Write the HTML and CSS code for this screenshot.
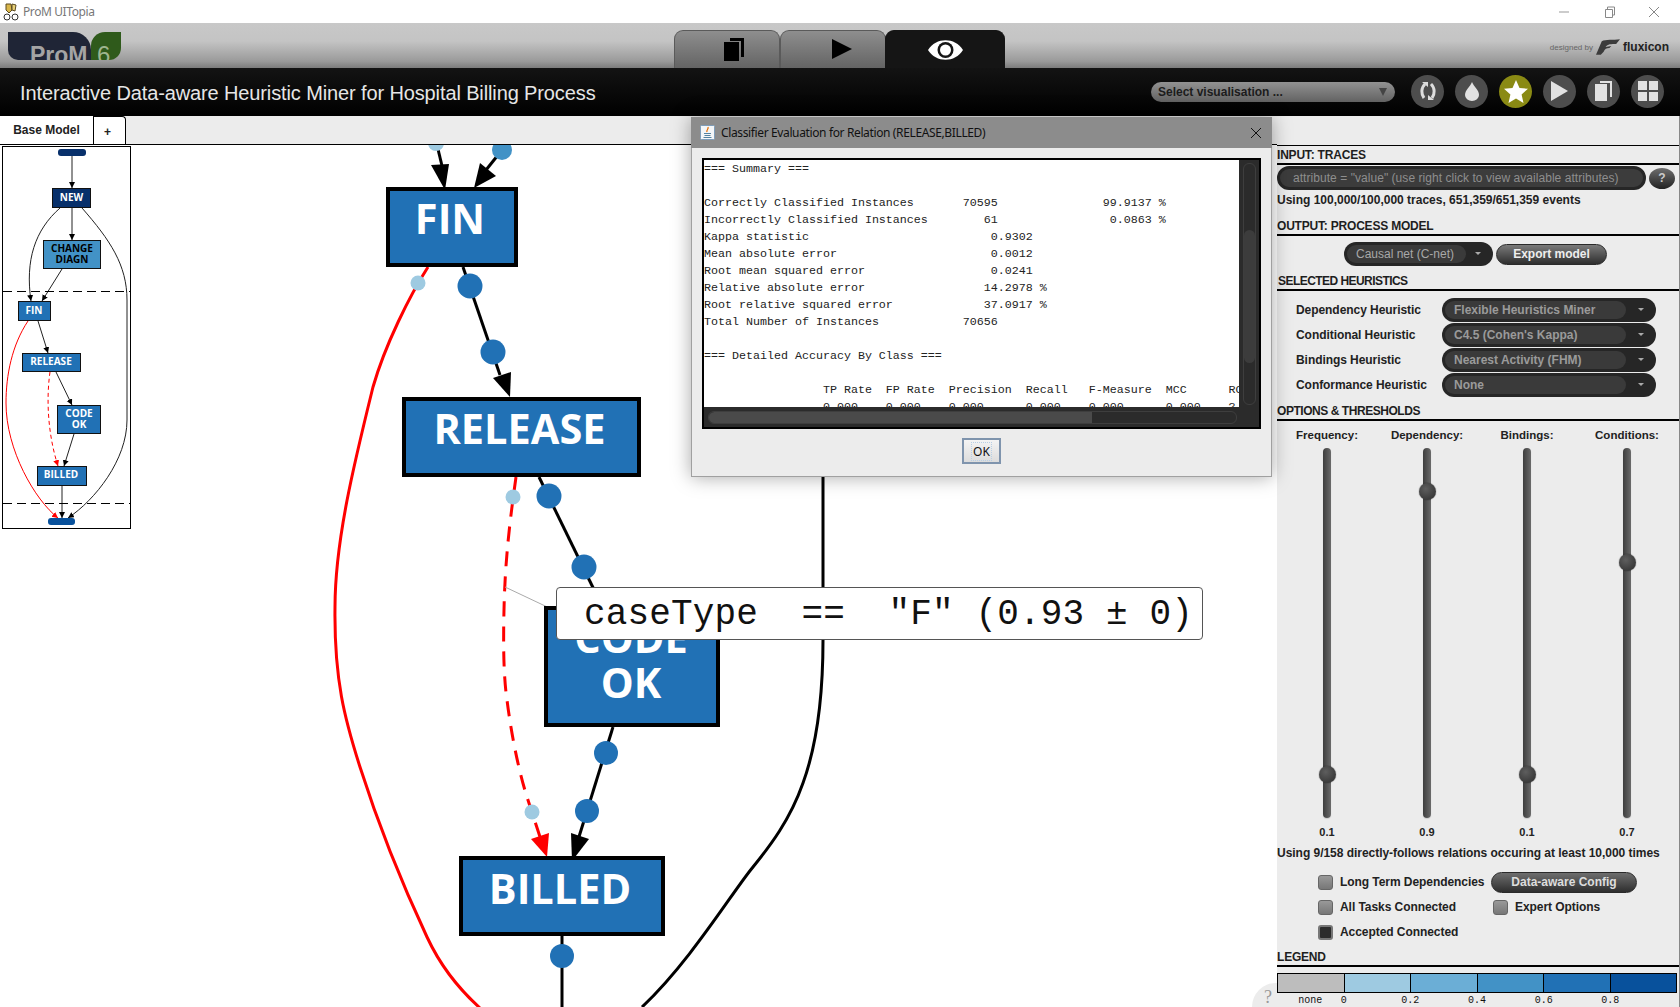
FILE: index.html
```html
<!DOCTYPE html>
<html lang="en">
<head>
  <meta charset="UTF-8">
  <title>ProM UITopia</title>
  <link rel="stylesheet" href="styles.css">
</head>
<body>
  <div class="titlebar">
    <svg class="app-icon" width="16" height="18" viewBox="0 0 16 18">
      <path d="M3 1h5l1 6-3 3-3-3z" fill="#d9b64a" stroke="#5a4a20"/>
      <path d="M9 1l4 1-1 6-3-1z" fill="#e9d27a" stroke="#5a4a20"/>
      <circle cx="4" cy="14" r="3" fill="#fff" stroke="#333"/>
      <circle cx="12" cy="14" r="3" fill="#fff" stroke="#333"/>
    </svg>
    <span class="app-name">ProM UITopia</span>
    <div class="win-buttons">
      <svg width="12" height="12" viewBox="0 0 12 12"><path d="M1 6h10" stroke="#999" fill="none"/></svg>
      <svg width="12" height="12" viewBox="0 0 12 12"><path d="M2.500 3.500h7v8h-7zM4.500 3.500v-2.500h7v8h-2" stroke="#888" fill="none"/></svg>
      <svg width="12" height="12" viewBox="0 0 12 12"><path d="M1 1l10 10M11 1l-10 10" stroke="#888" fill="none"/></svg>
    </div>
  </div>

  <div class="topbar">
    <div class="logo">
      <div class="logo-prom">ProM</div>
      <div class="logo-six">6</div>
    </div>
    <div class="views">
      <div class="view-tab view-tab-copy">
        <svg width="20" height="23" viewBox="0 0 20 23"><path d="M6 0h14v19h-3V3H6z" fill="#000"/><rect x="0" y="4" width="15" height="19" fill="#000"/></svg>
      </div>
      <div class="view-tab view-tab-play">
        <svg width="20" height="20" viewBox="0 0 20 20"><path d="M0 0l20 10L0 20z" fill="#000"/></svg>
      </div>
      <div class="view-tab view-tab-on">
        <svg width="35" height="20" viewBox="0 0 35 20"><path d="M0 10C8 -3 27 -3 35 10C27 23 8 23 0 10z" fill="#fff"/><circle cx="17.500" cy="10" r="8" fill="#151515"/><circle cx="17.500" cy="10" r="5.500" fill="#fff"/></svg>
      </div>
    </div>
    <div class="credit">
      <span class="credit-by">designed by</span>
      <svg width="24" height="16" viewBox="0 0 25 16"><path d="M6 2C10 0 18 1 25 0L21 5C16 5 12 5 10 8L16 7L14 9C11 9 9 10 8 13L5 16H0z" fill="#3c3c3c"/></svg>
      <span class="credit-name">fluxicon</span>
    </div>
  </div>

  <div class="headbar">
    <h1>Interactive Data-aware Heuristic Miner for Hospital Billing Process</h1>
    <div class="vis-select">Select visualisation ...<span class="vis-arrow"></span></div>
    <div class="round-btns">
      <div class="round-btn"><svg width="20" height="20" viewBox="0 0 20 20"><path d="M7 3C3 7 3 13 6 17M13 3C17 7 17 13 14 17" stroke="#ddd" stroke-width="3" fill="none"/><path d="M4 1h6v5zM16 19h-6v-5z" fill="#ddd"/></svg></div>
      <div class="round-btn"><svg width="14" height="19" viewBox="0 0 14 19"><path d="M7 0C9 5 14 8 14 13A7 6 0 0 1 0 13C0 8 5 5 7 0z" fill="#e2e2e2"/></svg></div>
      <div class="round-btn round-btn-on"><svg width="24" height="23" viewBox="0 0 24 23"><path d="M12 0l3.500 8 8.500.8-6.400 5.700 1.900 8.500L12 18.500 4.500 23l1.900-8.500L0 8.800 8.500 8z" fill="#fff"/></svg></div>
      <div class="round-btn"><svg width="17" height="20" viewBox="0 0 17 20"><path d="M0 0l17 10L0 20z" fill="#e2e2e2"/></svg></div>
      <div class="round-btn"><svg width="17" height="20" viewBox="0 0 17 20"><path d="M5 0h12v16h-2V2H5z" fill="#e2e2e2"/><rect y="3" width="12" height="17" fill="#e2e2e2"/></svg></div>
      <div class="round-btn"><svg width="20" height="20" viewBox="0 0 20 20"><path d="M0 0h9v9H0zM11 0h9v9h-9zM0 11h9v9H0zM11 11h9v9h-9z" fill="#e2e2e2"/></svg></div>
    </div>
  </div>

  <div class="main">
    <div class="workspace">
      <div class="tabs">
        <div class="tab tab-on">Base Model</div>
        <div class="tab tab-add">+</div>
      </div>
      <div class="canvas">
        <svg class="graph" width="1277" height="862" viewBox="0 145 1277 862">
          <defs>
            <marker id="mini-black" markerWidth="7" markerHeight="7" refX="6" refY="3" orient="auto"><path d="M0 0l6 3-6 3z" fill="#000"/></marker>
            <marker id="mini-red" markerWidth="7" markerHeight="7" refX="6" refY="3" orient="auto"><path d="M0 0l6 3-6 3z" fill="#f00"/></marker>
          </defs>

          <!-- main model -->
          <g class="edge">
            <path d="M437 145L443 170"/>
            <path d="M502 150L486 170"/>
            <path d="M463 267L500 375"/>
            <path d="M539 477L602 606"/>
            <path d="M613 727L578 840"/>
            <path d="M562 936V1007"/>
            <path d="M823 476V640C823 700 815 750 803 783C790 820 770 846 753 867C733 891 690 962 642 1007"/>
          </g>
          <path class="edge-red" d="M428 267C410 295 385 345 373 387C355 460 335 540 335 607C334 680 345 720 360 767C380 830 405 890 427 937C440 965 460 990 480 1008"/>
          <path class="edge-red edge-dash" d="M516 477C510 520 505 560 504 610C503 650 504 680 507 700C512 740 520 775 527 797L541 840"/>
          <path d="M505 587L560 613" stroke="#aaa" fill="none"/>
          <path d="M445 190L431 165L449 164z"/>
          <path d="M474 188L480 163L496 176z"/>
          <path d="M510 397L493 378L511 372z"/>
          <path d="M572 861L571 833L589 839z"/>
          <path d="M547 857L531 839L549 833z" fill="#f00"/>

          <rect class="node" x="388" y="189" width="128" height="76"/>
          <text class="node-text" x="450" y="234">FIN</text>
          <rect class="node" x="404" y="399" width="235" height="76"/>
          <text class="node-text" x="519.500" y="444">RELEASE</text>
          <rect class="node" x="546" y="608" width="172" height="117"/>
          <text class="node-text" x="631" y="653">CODE</text>
          <text class="node-text" x="631" y="698">OK</text>
          <rect class="node" x="461" y="858" width="202" height="76"/>
          <text class="node-text" x="560" y="904">BILLED</text>

          <circle class="dot-a" cx="436" cy="143" r="8"/>
          <circle class="dot-c" cx="502" cy="150" r="10"/>
          <circle class="dot-a" cx="418" cy="283" r="7.500"/>
          <circle class="dot-d" cx="470" cy="286" r="12.500"/>
          <circle class="dot-d" cx="493" cy="352" r="12.500"/>
          <circle class="dot-a" cx="513" cy="497" r="7.500"/>
          <circle class="dot-d" cx="549" cy="496" r="12.500"/>
          <circle class="dot-d" cx="584" cy="567" r="12.500"/>
          <circle class="dot-d" cx="606" cy="753" r="12"/>
          <circle class="dot-d" cx="587" cy="811" r="12"/>
          <circle class="dot-a" cx="532" cy="812" r="7.500"/>
          <circle class="dot-d" cx="562" cy="956" r="12"/>

          <!-- overview -->
          <rect class="mini-frame" x="2.500" y="146.500" width="128" height="382"/>
          <g class="mini-edges">
            <path d="M72 156V188"/>
            <path d="M72 208V240"/>
            <path d="M60 208C35 230 25 260 31 301"/>
            <path d="M62 269L42 301"/>
            <path d="M82 208C110 240 127 265 127 300V420C127 460 95 500 68 518"/>
            <path d="M38 321L48 353"/>
            <path d="M56 372L72 405"/>
            <path d="M74 434L64 466"/>
            <path d="M62 486V518"/>
          </g>
          <path class="mini-red" d="M28 321C12 345 6 375 6 403C6 450 35 500 58 518"/>
          <path class="mini-red mini-dash" d="M50 372C46 400 48 435 58 466"/>
          <path class="mini-cut" d="M3 291.500H130M3 503.500H130"/>
          <rect class="mini-pill" x="58" y="149" width="28" height="7" rx="3"/>
          <rect class="mini-node mini-dark" x="52.500" y="188.500" width="38" height="19"/>
          <text class="mini-text" x="71.500" y="201">NEW</text>
          <rect class="mini-node mini-light" x="43.500" y="240.500" width="57" height="28"/>
          <text class="mini-text mini-text-dark" x="72" y="252">CHANGE</text>
          <text class="mini-text mini-text-dark" x="72" y="263">DIAGN</text>
          <rect class="mini-node" x="18.500" y="301.500" width="32" height="19"/>
          <text class="mini-text" x="34" y="314">FIN</text>
          <rect class="mini-node" x="22.500" y="353.500" width="58" height="18"/>
          <text class="mini-text" x="51" y="365">RELEASE</text>
          <rect class="mini-node" x="57.500" y="405.500" width="43" height="28"/>
          <text class="mini-text" x="79" y="417">CODE</text>
          <text class="mini-text" x="79" y="428">OK</text>
          <rect class="mini-node" x="37.500" y="466.500" width="49" height="19"/>
          <text class="mini-text" x="61" y="478">BILLED</text>
          <rect class="mini-pill mini-pill-end" x="48" y="518" width="27" height="7" rx="3"/>
        </svg>
        <div class="help-bubble">?</div>
      </div>
    </div>

    <div class="panel">
      <h2 class="sec sec-input">INPUT: TRACES</h2>
      <div class="filter-row">
        <div class="filter">attribute = "value" (use right click to view available attributes)</div>
        <div class="help-btn">?</div>
      </div>
      <p class="info">Using 100,000/100,000 traces, 651,359/651,359 events</p>

      <h2 class="sec sec-output">OUTPUT: PROCESS MODEL</h2>
      <div class="output-row">
        <div class="combo combo-small"><span class="combo-val">Causal net (C-net)</span><span class="combo-arrow"></span></div>
        <div class="pill-btn pill-export">Export model</div>
      </div>

      <h2 class="sec sec-heur">SELECTED HEURISTICS</h2>
      <div class="heur-list">
        <div class="heur-row">
          <span class="heur-label">Dependency Heuristic</span>
          <div class="combo"><span class="combo-val">Flexible Heuristics Miner</span><span class="combo-arrow"></span></div>
        </div>
        <div class="heur-row">
          <span class="heur-label">Conditional Heuristic</span>
          <div class="combo"><span class="combo-val">C4.5 (Cohen's Kappa)</span><span class="combo-arrow"></span></div>
        </div>
        <div class="heur-row">
          <span class="heur-label">Bindings Heuristic</span>
          <div class="combo"><span class="combo-val">Nearest Activity (FHM)</span><span class="combo-arrow"></span></div>
        </div>
        <div class="heur-row">
          <span class="heur-label">Conformance Heuristic</span>
          <div class="combo"><span class="combo-val">None</span><span class="combo-arrow"></span></div>
        </div>
      </div>

      <h2 class="sec sec-opts">OPTIONS &amp; THRESHOLDS</h2>
      <div class="sliders">
        <div class="slider">
          <span class="slider-name">Frequency:</span>
          <div class="track"><div class="knob" style="top: 88.100%"></div></div>
          <span class="slider-val">0.1</span>
        </div>
        <div class="slider">
          <span class="slider-name">Dependency:</span>
          <div class="track"><div class="knob" style="top: 11.600%"></div></div>
          <span class="slider-val">0.9</span>
        </div>
        <div class="slider">
          <span class="slider-name">Bindings:</span>
          <div class="track"><div class="knob" style="top: 88.100%"></div></div>
          <span class="slider-val">0.1</span>
        </div>
        <div class="slider">
          <span class="slider-name">Conditions:</span>
          <div class="track"><div class="knob" style="top: 30.800%"></div></div>
          <span class="slider-val">0.7</span>
        </div>
      </div>
      <p class="info info-rel">Using 9/158 directly-follows relations occuring at least 10,000 times</p>

      <div class="checks">
        <div class="check"><span class="box"></span>Long Term Dependencies</div>
        <div class="pill-btn pill-data">Data-aware Config</div>
        <div class="check"><span class="box"></span>All Tasks Connected</div>
        <div class="check"><span class="box"></span>Expert Options</div>
        <div class="check"><span class="box box-on"></span>Accepted Connected</div>
      </div>

      <h2 class="sec sec-legend">LEGEND</h2>
      <div class="legend">
        <span class="swatch sw-0"></span>
        <span class="swatch sw-1"></span>
        <span class="swatch sw-2"></span>
        <span class="swatch sw-3"></span>
        <span class="swatch sw-4"></span>
        <span class="swatch sw-5"></span>
      </div>
      <div class="legend-ticks">
        <span class="tick tick-none">none</span>
        <span class="tick"><b>0</b></span>
        <span class="tick"><b>0.2</b></span>
        <span class="tick"><b>0.4</b></span>
        <span class="tick"><b>0.6</b></span>
        <span class="tick"><b>0.8</b></span>
      </div>
    </div>
  </div>

  <div class="tooltip">caseType  ==  "F" (0.93 ± 0)</div>

  <div class="dialog">
    <div class="dialog-title">
      <svg class="java-icon" width="15" height="15" viewBox="0 0 15 15">
        <rect x="0.500" y="0.500" width="14" height="14" rx="1" fill="#f4f6f8" stroke="#7f9db9"/>
        <path d="M8 2C9 4 6 5 7 7" stroke="#e76f00" stroke-width="1.300" fill="none"/>
        <path d="M4 8.500h7M4.500 10.500h6M3.500 12.500h8" stroke="#5382a1" fill="none"/>
      </svg>
      <span>Classifier Evaluation for Relation (RELEASE,BILLED)</span>
      <svg class="dialog-x" width="12" height="12" viewBox="0 0 12 12"><path d="M1 1l10 10M11 1l-10 10" stroke="#111" fill="none"/></svg>
    </div>
    <div class="dialog-body">
      <div class="result-box">
        <div class="result-top">
          <pre class="result-text">=== Summary ===

Correctly Classified Instances       70595               99.9137 %
Incorrectly Classified Instances        61                0.0863 %
Kappa statistic                          0.9302
Mean absolute error                      0.0012
Root mean squared error                  0.0241
Relative absolute error                 14.2978 %
Root relative squared error             37.0917 %
Total Number of Instances            70656

=== Detailed Accuracy By Class ===

                 TP Rate  FP Rate  Precision  Recall   F-Measure  MCC      ROC Area  PRC Area  Class
                 0.000    0.000    0.000      0.000    0.000      0.000    ?         0.000     T</pre>
          <div class="vscroll"><div class="vthumb"></div></div>
        </div>
        <div class="hscroll"><div class="hthumb"></div></div>
      </div>
      <div class="ok-btn"><span>OK</span></div>
    </div>
  </div>
</body>
</html>
```

FILE: styles.css
```css
* {
  box-sizing: border-box;
}
html, body {
  margin: 0;
  padding: 0;
}
body {
  width: 1680px;
  height: 1007px;
  overflow: hidden;
  position: relative;
  display: flex;
  flex-direction: column;
  font-family: "Liberation Sans", Arial, sans-serif;
  background: #ececec;
}

/* window title */
.titlebar {
  height: 23px;
  background: #fff;
  display: flex;
  align-items: center;
  padding-left: 3px;
}
.app-icon {
  margin-right: 4px;
}
.app-name {
  font: 12px "Noto Sans", sans-serif;
  letter-spacing: -0.4px;
  color: #777;
}
.win-buttons {
  margin-left: auto;
  display: flex;
  gap: 33px;
  padding-right: 20px;
}

/* grey strip */
.topbar {
  height: 45px;
  background: linear-gradient(to bottom, #c8c8c8 0%, #c4c4c4 40%, #9a9a9a 85%, #7c7c7c 100%);
  position: relative;
  display: flex;
  padding-left: 8px;
}
.logo {
  margin-top: 9px;
  height: 28px;
  display: flex;
}
.logo-prom {
  width: 83px;
  background: #1f2536;
  border-radius: 0 18px 0 10px;
  color: #a4a4a4;
  font-size: 23px;
  font-weight: bold;
  line-height: 28px;
  padding: 9px 0 0 22px;
  overflow: hidden;
}
.logo-six {
  width: 30px;
  background: #2f5a1b;
  border-radius: 14px 0 12px 0;
  color: #9fb58f;
  font-size: 24px;
  line-height: 28px;
  padding: 9px 0 0 6px;
  overflow: hidden;
}
.views {
  position: absolute;
  left: 674px;
  top: 7px;
  height: 38px;
  display: flex;
}
.view-tab {
  width: 106px;
  height: 38px;
  background: linear-gradient(to bottom, #8e8e8e, #646464);
  border: 1px solid #5a5a5a;
  border-bottom: 0;
  border-radius: 9px 9px 0 0;
  display: flex;
  align-items: center;
  justify-content: center;
}
.view-tab-copy {
  padding-left: 14px;
}
.view-tab-play {
  padding-left: 17px;
  padding-bottom: 2px;
}
.view-tab-on {
  width: 120px;
  background: #151515;
  border-color: #151515;
  margin-left: -1px;
}
.credit {
  margin-left: auto;
  display: flex;
  align-items: center;
  gap: 3px;
  padding: 3px 11px 0 0;
}
.credit-by {
  font-size: 8px;
  color: #666;
}
.credit-name {
  font-size: 12px;
  font-weight: bold;
  color: #222;
}

/* black strip */
.headbar {
  height: 48px;
  background: linear-gradient(to bottom, #131313, #000);
  display: flex;
  align-items: center;
  padding-left: 20px;
}
.headbar h1 {
  margin: 2px 0 0;
  font-size: 20px;
  font-weight: normal;
  letter-spacing: -0.12px;
  color: #e6e6e6;
  width: 1131px;
  white-space: nowrap;
}
.vis-select {
  width: 244px;
  height: 20px;
  padding-left: 7px;
  border-radius: 10px;
  background: linear-gradient(to bottom, #929292, #626262);
  font-size: 12px;
  font-weight: bold;
  line-height: 21px;
  color: #1c1c1c;
  position: relative;
}
.vis-arrow {
  position: absolute;
  right: 8px;
  top: 6px;
  border-left: 4.500px solid transparent;
  border-right: 4.500px solid transparent;
  border-top: 8px solid #444;
}
.round-btns {
  display: flex;
  gap: 11px;
  margin-left: 16px;
  margin-top: -2px;
}
.round-btn {
  width: 33px;
  height: 33px;
  border-radius: 50%;
  background: #4d4d4d;
  display: flex;
  align-items: center;
  justify-content: center;
}
.round-btn-on {
  background: #8a8a14;
}

/* main area */
.main {
  flex: 1;
  display: flex;
  min-height: 0;
}
.workspace {
  width: 1277px;
  display: flex;
  flex-direction: column;
}
.tabs {
  height: 29px;
  display: flex;
  align-items: flex-end;
  border-bottom: 1px solid #000;
}
.tab {
  background: #fff;
  font-size: 12px;
  font-weight: bold;
  color: #222;
  text-align: center;
}
.tab-on {
  width: 94px;
  height: 29px;
  line-height: 28px;
  border-right: 1px solid #000;
  border-top: 1px solid #000;
}
.tab-add {
  width: 32px;
  height: 28px;
  line-height: 30px;
  padding-right: 4px;
  border: 1px solid #000;
  border-bottom: 0;
  border-left: 0;
  border-radius: 0 4px 0 0;
}
.canvas {
  flex: 1;
  background: #fff;
  position: relative;
  overflow: hidden;
}
.graph {
  display: block;
}
.edge path {
  stroke: #000;
  stroke-width: 3;
  fill: none;
}
.edge-red {
  stroke: #f00;
  stroke-width: 3;
  fill: none;
}
.edge-dash {
  stroke-dasharray: 15 10;
}
.node {
  fill: #2171b5;
  stroke: #000;
  stroke-width: 4;
}
.node-text {
  font-family: "Open Sans", sans-serif;
  font-size: 41.500px;
  font-weight: 700;
  fill: #fff;
  text-anchor: middle;
}
.dot-a { fill: #9ecae1; }
.dot-c { fill: #4292c6; }
.dot-d { fill: #2171b5; }

.mini-frame {
  fill: #fff;
  stroke: #000;
}
.mini-edges path {
  stroke: #222;
  fill: none;
  marker-end: url(#mini-black);
}
.mini-red {
  stroke: #f00;
  fill: none;
  marker-end: url(#mini-red);
}
.mini-dash {
  stroke-dasharray: 4 3;
}
.mini-cut {
  stroke: #000;
  stroke-dasharray: 9 5;
  fill: none;
}
.mini-pill { fill: #08306b; }
.mini-pill-end { fill: #08519c; }
.mini-node {
  fill: #2171b5;
  stroke: #111;
}
.mini-dark { fill: #08306b; }
.mini-light { fill: #4292c6; }
.mini-text {
  font-family: "Open Sans", sans-serif;
  font-size: 10px;
  font-weight: 700;
  fill: #fff;
  text-anchor: middle;
}
.mini-text-dark {
  fill: #000;
}
.help-bubble {
  position: absolute;
  right: 0;
  bottom: 0;
  width: 25px;
  height: 24px;
  background: #ececec;
  border-radius: 24px 0 0 0;
  font: 18px "Liberation Serif", serif;
  color: #999;
  padding: 4px 0 0 12px;
}

/* right panel */
.panel {
  width: 403px;
  padding-top: 29px;
  border-right: 1px solid #888;
  background: linear-gradient(to bottom, transparent 29px, #000 29px, #000 30px, transparent 30px);
  color: #222;
  font-size: 12px;
}
.sec {
  margin: 0;
  height: 19px;
  font-size: 12px;
  font-weight: bold;
  line-height: 18px;
  letter-spacing: -0.2px;
  color: #1e1e1e;
  border-bottom: 2px solid #000;
}
.sec-input {
  margin-top: 1px;
}
.filter-row {
  display: flex;
  gap: 3px;
  margin-top: 1px;
  align-items: center;
  height: 24px;
}
.filter {
  width: 369px;
  height: 24px;
  background: #3c3c3c;
  border: 3px solid #262626;
  border-radius: 12px;
  color: #8e8e8e;
  font-size: 12px;
  letter-spacing: 0.05px;
  line-height: 18px;
  padding-left: 13px;
  white-space: nowrap;
}
.help-btn {
  width: 26px;
  height: 21px;
  border-radius: 50%;
  background: linear-gradient(to bottom, #6e6e6e, #222);
  color: #ccc;
  font-weight: bold;
  text-align: center;
  line-height: 21px;
}
.info {
  margin: 0;
  font-weight: bold;
  line-height: 18px;
  height: 18px;
  margin-top: 1px;
  white-space: nowrap;
}
.sec-output {
  margin-top: 8px;
}
.output-row {
  display: flex;
  gap: 3px;
  align-items: center;
  margin: 6px 0 0 67px;
  height: 24px;
}
.combo {
  width: 214px;
  height: 24px;
  border-radius: 12px;
  background: #262626;
  padding: 3px;
  position: relative;
  font-weight: bold;
  color: #9a9a9a;
}
.combo-small {
  width: 149px;
  font-weight: normal;
  color: #a8a8a8;
}
.combo-val {
  display: block;
  width: 181px;
  height: 18px;
  line-height: 18px;
  padding-left: 9px;
  border-radius: 9px;
  background: #3a3a3a;
}
.combo-small .combo-val {
  width: 119px;
  white-space: nowrap;
}
.combo-arrow {
  position: absolute;
  right: 12px;
  top: 10px;
  border-left: 3px solid transparent;
  border-right: 3px solid transparent;
  border-top: 3px solid #aaa;
}
.pill-btn {
  border-radius: 11px;
  background: linear-gradient(to bottom, #7a7a7a, #2e2e2e);
  border: 1px solid #2a2a2a;
  font-weight: bold;
  text-align: center;
  height: 21px;
  line-height: 19px;
}
.pill-export {
  width: 111px;
  color: #eee;
}
.sec-heur {
  margin-top: 6px;
  padding-left: 1px;
  letter-spacing: -0.55px;
}
.heur-list {
  display: flex;
  flex-direction: column;
  gap: 1px;
  margin-top: 7px;
  padding-left: 19px;
}
.heur-row {
  display: flex;
  align-items: center;
  height: 24px;
}
.heur-label {
  width: 146px;
  font-weight: bold;
  letter-spacing: -0.06px;
  white-space: nowrap;
}
.sec-opts {
  margin-top: 5px;
  letter-spacing: -0.45px;
}
.sliders {
  display: grid;
  grid-template-columns: repeat(4, 100px);
  margin-top: 6px;
}
.slider {
  display: flex;
  flex-direction: column;
  align-items: center;
}
.slider-name {
  height: 16px;
  line-height: 16px;
  font-size: 11.500px;
  font-weight: bold;
}
.track {
  width: 8px;
  height: 370px;
  margin-top: 5px;
  border-radius: 4px;
  background: linear-gradient(to right, #3e3e3e, #6a6a6a);
  box-shadow: 0 1px 1px #ccc;
  position: relative;
}
.knob {
  position: absolute;
  left: -4px;
  width: 17px;
  height: 17px;
  margin-top: -8px;
  border-radius: 50%;
  background: radial-gradient(circle at 40% 35%, #5e5e5e, #2c2c2c);
  box-shadow: 0 0 1px #111;
}
.slider-val {
  margin-top: 7px;
  height: 14px;
  line-height: 14px;
  font-size: 11px;
  font-weight: bold;
}
.info-rel {
  margin-top: 6px;
  height: 16px;
  line-height: 16px;
  letter-spacing: -0.03px;
}
.checks {
  display: grid;
  grid-template-columns: 175px auto;
  grid-auto-rows: 24px;
  align-items: center;
  margin-top: 9px;
  padding-left: 41px;
  row-gap: 1px;
}
.check {
  display: flex;
  align-items: center;
  font-weight: bold;
  letter-spacing: -0.06px;
  white-space: nowrap;
}
.box {
  width: 15px;
  height: 15px;
  margin-right: 7px;
  border-radius: 3px;
  border: 1px solid #666;
  background: linear-gradient(to bottom, #999, #777);
}
.box-on {
  background: #2c2c2c;
  border: 2px solid #777;
}
.pill-data {
  width: 146px;
  margin-left: -2px;
  color: #ddd;
  background: linear-gradient(to bottom, #6e6e6e, #2e2e2e);
}
.sec-legend {
  margin-top: 4px;
}
.legend {
  display: flex;
  width: 400px;
  height: 20px;
  margin-top: 6px;
  border: 1px solid #000;
}
.swatch {
  flex: 1;
  border-left: 1px solid #000;
}
.swatch:first-child { border-left: 0; }
.sw-0 { background: #bdbdbd; }
.sw-1 { background: #9ecae1; }
.sw-2 { background: #6baed6; }
.sw-3 { background: #4292c6; }
.sw-4 { background: #2171b5; }
.sw-5 { background: #08519c; }
.legend-ticks {
  display: flex;
  width: 400px;
  margin-top: 2px;
  font: 10px "Liberation Mono", monospace;
  color: #111;
}
.tick {
  flex: 1;
}
.tick b {
  display: inline-block;
  font-weight: normal;
  transform: translateX(-50%);
}
.tick-none {
  text-align: center;
}

/* floating things */
.tooltip {
  position: absolute;
  left: 556px;
  top: 587px;
  width: 647px;
  height: 53px;
  padding: 2px 0 0 27px;
  background: #fff;
  border: 1px solid #555;
  border-radius: 4px;
  font: 36px/50px "Liberation Mono", monospace;
  letter-spacing: 0.15px;
  color: #111;
  white-space: pre;
}
.dialog {
  position: absolute;
  left: 691px;
  top: 117px;
  width: 581px;
  height: 360px;
  background: #ececec;
  border: 1px solid #a0a0a0;
  border-top: 0;
  box-shadow: 0 0 18px rgba(0, 0, 0, 0.35);
}
.dialog-title {
  height: 31px;
  margin: 0 -1px;
  background: #8c8c8c;
  display: flex;
  align-items: center;
  padding: 0 10px 0 9px;
  font: 12px "Noto Sans", sans-serif;
  letter-spacing: -0.37px;
  color: #111;
}
.java-icon {
  margin-right: 6px;
}
.dialog-x {
  margin-left: auto;
}
.dialog-body {
  padding: 10px 10px 0;
}
.result-box {
  width: 559px;
  height: 271px;
  border: 2px solid #000;
  background: #2b2b2b;
}
.result-top {
  display: flex;
  height: 247px;
}
.result-text {
  margin: 0;
  width: 535px;
  height: 247px;
  padding-top: 1px;
  background: #fff;
  overflow: hidden;
  font: 11.660px/17px "Liberation Mono", monospace;
  color: #222;
}
.vscroll {
  width: 13px;
  height: 242px;
  margin: 3px 0 0 4px;
  border: 1px solid #3e3e3e;
  border-radius: 6px;
  padding-top: 66px;
}
.vthumb {
  height: 133px;
  border-radius: 6px;
  background: #3c3c3c;
}
.hscroll {
  width: 529px;
  height: 13px;
  margin: 4px 0 0 4px;
  border: 1px solid #3e3e3e;
  border-radius: 6px;
}
.hthumb {
  width: 383px;
  height: 11px;
  background: #4a4a4a;
  border-radius: 6px 0 0 6px;
}
.ok-btn {
  width: 39px;
  height: 26px;
  margin: 9px auto 0;
  border: 2px solid #7f94ad;
  background: linear-gradient(to bottom, #f4f4f4, #dcdcdc);
  display: flex;
  align-items: center;
  justify-content: center;
  font: 12px "Noto Sans", sans-serif;
  color: #111;
}
.ok-btn span {
  padding: 0 1px;
  outline: 1px dotted #b8cfe5;
}
```
